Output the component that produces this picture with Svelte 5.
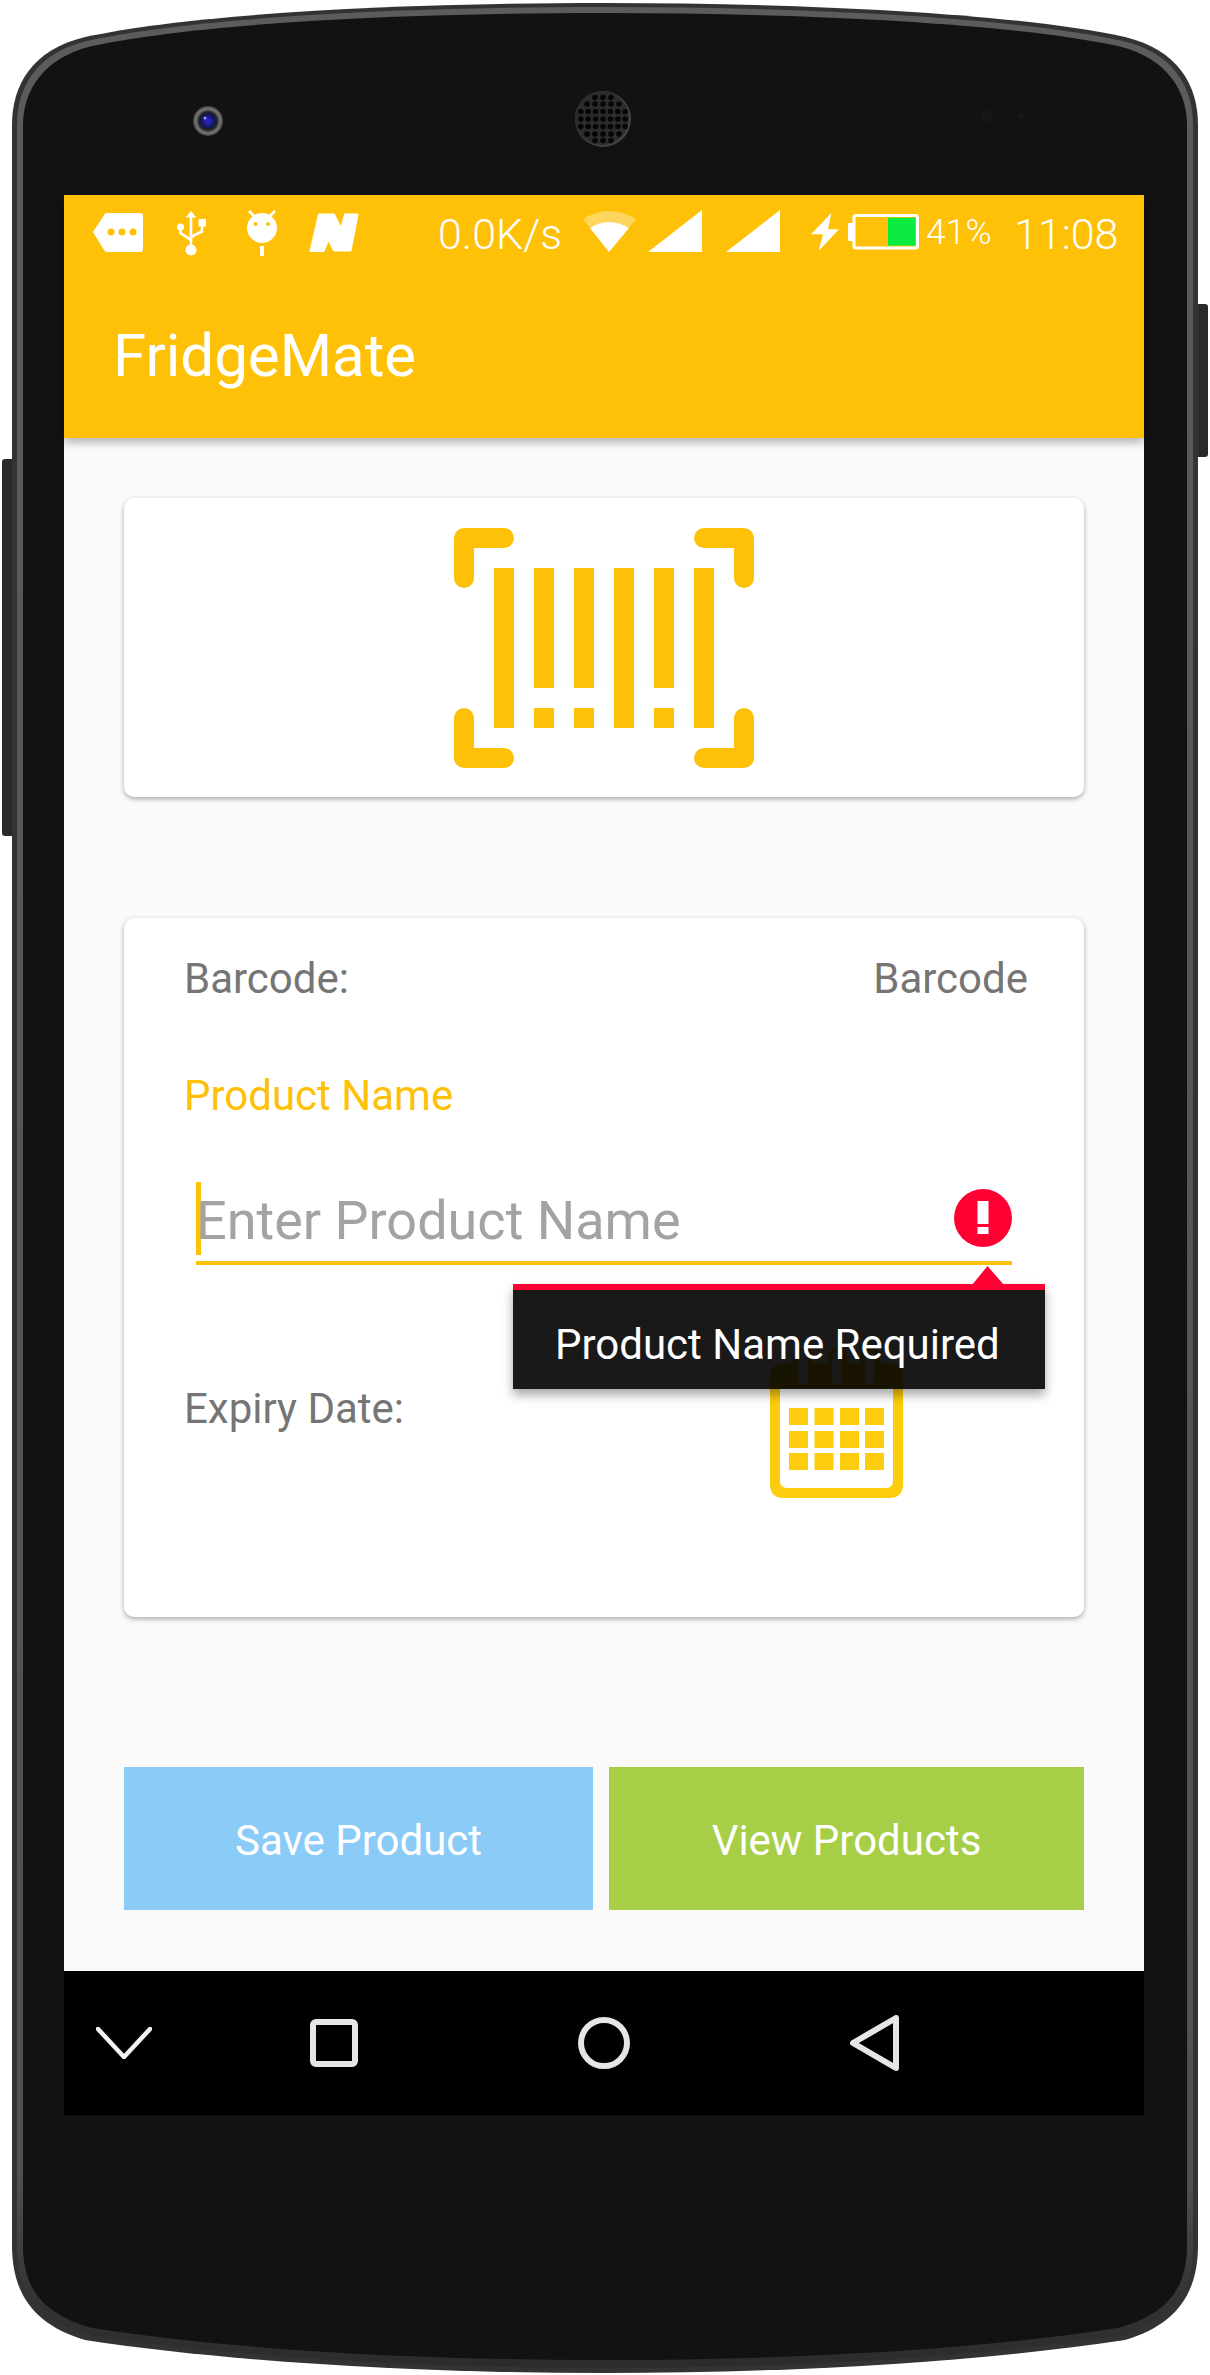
<script>
  const barcodeBars = [
    { x: 40, split: false },
    { x: 80, split: true },
    { x: 120, split: true },
    { x: 160, split: false },
    { x: 200, split: true },
    { x: 240, split: false }
  ];
  const calCols = [19, 44.5, 70, 95];
  const calRows = [60, 83, 105];
  const calPins = [33, 67, 100];
  const speakerHoles = [];
  [[0, 3, 7.4], [-7.5, 3, 7.4], [7.5, 3, 7.4], [-15, 2, 8], [15, 2, 8], [-21.5, 1, 8], [21.5, 1, 8]].forEach(([y, r, step]) => {
    for (let i = -r; i <= r; i++) {
      const x = i * step + (Math.abs(y) === 7.5 || Math.abs(y) === 21.5 ? 0 : 0);
      speakerHoles.push({ x: 603 + x, y: 119 + y });
    }
  });
</script>

<div class="device">
  <svg class="shell" width="1210" height="2375" viewBox="0 0 1210 2375" aria-hidden="true">
    <defs>
      <radialGradient id="lens" cx="0.5" cy="0.5" r="0.5">
        <stop offset="0" stop-color="#2a2ad0" />
        <stop offset="0.45" stop-color="#14145a" />
        <stop offset="0.6" stop-color="#222" />
        <stop offset="0.8" stop-color="#777" />
        <stop offset="1" stop-color="#444" />
      </radialGradient>
      <linearGradient id="rim" x1="0" y1="0" x2="0" y2="1">
        <stop offset="0" stop-color="#5c5c5c" />
        <stop offset="0.92" stop-color="#505050" />
        <stop offset="0.97" stop-color="#333" />
        <stop offset="1" stop-color="#2c2c2c" />
      </linearGradient>
    </defs>
    <rect x="2" y="459" width="20" height="377" rx="3" fill="#2a2a2a" />
    <rect x="1188" y="304" width="20" height="153" rx="3" fill="#2a2a2a" />
    <path d="M12 125 C12 85 32 50 85 37 C200 12 420 3 605 3 C790 3 1010 12 1125 37 C1178 50 1198 85 1198 125 L1198 2245 C1198 2295 1175 2325 1125 2340 C980 2362 790 2373 605 2373 C420 2373 230 2362 85 2340 C35 2325 12 2295 12 2245 Z" fill="#333" />
    <path d="M17 125 C17 88 36 53 87 41 C200 16 420 7 605 7 C790 7 1010 16 1123 41 C1174 53 1193 88 1193 125 L1193 2245 C1193 2292 1172 2320 1123 2335 C980 2357 790 2368 605 2368 C420 2368 230 2357 87 2335 C38 2320 17 2292 17 2245 Z" fill="url(#rim)" />
    <path d="M23 125 C23 92 42 58 92 46 C205 22 420 13 605 13 C790 13 1005 22 1118 46 C1168 58 1187 92 1187 125 L1187 2245 C1187 2288 1168 2314 1118 2328 C975 2350 790 2360 605 2360 C420 2360 235 2350 92 2328 C42 2314 23 2288 23 2245 Z" fill="#121212" />
    <circle cx="208" cy="121" r="15" fill="url(#lens)" />
    <circle cx="205" cy="118" r="1.5" fill="#9a9aff" />
    <circle cx="603" cy="119" r="28" fill="#444" />
    <circle cx="602" cy="118" r="27" fill="#2c2c2c" />
    {#each speakerHoles as hole}
      <circle cx={hole.x} cy={hole.y} r="2.8" fill="#060606" />
    {/each}
    <circle cx="987" cy="116" r="6" fill="#191716" />
    <circle cx="1021" cy="116" r="3.5" fill="#1c1614" />
  </svg>

  <div class="screen">
    <header class="bar">
      <div class="status">
        <svg class="tag" width="50" height="48" viewBox="0 0 50 48" aria-hidden="true">
          <path d="M0 22 L11 5 Q12 3 14 3 H47 Q50 3 50 6 V39 Q50 42 47 42 H14 Q12 42 11 40 Z" fill="#fff" />
          <circle cx="18" cy="22" r="3.5" fill="#ffc107" />
          <circle cx="29" cy="22" r="3.5" fill="#ffc107" />
          <circle cx="40" cy="22" r="3.5" fill="#ffc107" />
        </svg>
        <svg class="usb" width="29" height="48" viewBox="0 0 29 48" aria-hidden="true">
          <path d="M14 1 L19.5 7.5 H8.5 Z" fill="#fff" />
          <circle cx="14" cy="40" r="5.5" fill="#fff" />
          <circle cx="3.5" cy="17" r="3.5" fill="#fff" />
          <rect x="21.5" y="9" width="7.5" height="7.5" fill="#fff" />
          <path d="M14 6 V36 M3.5 17 V23 L14 30 M25 16 V21.5 L14 27" fill="none" stroke="#fff" stroke-width="2.6" />
        </svg>
        <svg class="droid" width="30" height="48" viewBox="0 0 30 48" aria-hidden="true">
          <circle cx="15" cy="18" r="15" fill="#fff" />
          <circle cx="8.5" cy="14" r="2" fill="#ffc107" />
          <circle cx="21" cy="14" r="2" fill="#ffc107" />
          <path d="M2 1 L8 7 M28 1 L22 7" stroke="#fff" stroke-width="2.6" />
          <rect x="13" y="36" width="4" height="10" fill="#fff" />
        </svg>
        <svg class="nfc" width="50" height="48" viewBox="0 0 50 48" aria-hidden="true">
          <path d="M1.5 41 L10 4.5 H25 L32 19 L36 4.5 H48.5 L41.5 40.5 H25 L19.5 29 L14.5 41 Z" fill="#fff" stroke="#fff" stroke-width="2" stroke-linejoin="round" />
        </svg>
        <span class="speed">0.0K/s</span>
        <svg class="wifi" width="53" height="48" viewBox="0 0 53 48" aria-hidden="true">
          <path d="M26 42 L0 9 Q26 -7 53 9 Z" fill="#fff" opacity="0.35" />
          <path d="M26 42 L7 18 Q26 6 46 18 Z" fill="#fff" />
        </svg>
        <svg class="sig1" width="54" height="48" viewBox="0 0 54 48" aria-hidden="true">
          <path d="M0 42 L54 0 V42 Z" fill="#fff" />
        </svg>
        <svg class="sig2" width="54" height="48" viewBox="0 0 54 48" aria-hidden="true">
          <path d="M0 42 L54 0 V42 Z" fill="#fff" />
        </svg>
        <svg class="bolt" width="28" height="48" viewBox="0 0 28 48" aria-hidden="true">
          <path d="M20.4 3 L0 24.3 H12 L7.6 41 L28 19.3 H17 Z" fill="#fff" />
        </svg>
        <svg class="batt" width="71" height="48" viewBox="0 0 71 48" aria-hidden="true">
          <rect x="0" y="13" width="6" height="18" rx="1" fill="#fff" />
          <rect x="6" y="5.5" width="63.5" height="32.5" rx="2" fill="none" stroke="#fff" stroke-width="3" />
          <rect x="40" y="7.7" width="27.5" height="28" fill="#0beb40" />
        </svg>
        <span class="pct">41%</span>
        <span class="time">11:08</span>
      </div>
      <h1>FridgeMate</h1>
    </header>

    <main class="content">
      <section class="card scan">
        <svg width="300" height="240" viewBox="0 0 300 240" aria-label="Scan barcode">
          <g fill="none" stroke="#ffc107" stroke-width="20" stroke-linecap="round" stroke-linejoin="round">
            <path d="M10 50 V10 H50" />
            <path d="M250 10 H290 V50" />
            <path d="M10 190 V230 H50" />
            <path d="M250 230 H290 V190" />
          </g>
          {#each barcodeBars as bar}
            {#if bar.split}
              <rect x={bar.x} y="40" width="20" height="120" fill="#ffc107" />
              <rect x={bar.x} y="180" width="20" height="20" fill="#ffc107" />
            {:else}
              <rect x={bar.x} y="40" width="20" height="160" fill="#ffc107" />
            {/if}
          {/each}
        </svg>
      </section>

      <section class="card form">
        <div class="row">
          <span>Barcode:</span>
          <span>Barcode</span>
        </div>
        <div class="name-label">Product Name</div>
        <div class="field">
          <span class="caret"></span>
          <span class="placeholder">Enter Product Name</span>
          <svg class="error" width="58" height="58" viewBox="0 0 58 58" aria-hidden="true">
            <circle cx="29" cy="29" r="29" fill="#ff0033" />
            <rect x="23.5" y="12" width="11" height="23" fill="#fff" />
            <rect x="23.5" y="38" width="11" height="7" fill="#fff" />
          </svg>
          <div class="tip" role="alert">
            <svg class="tip-arrow" width="32" height="19" viewBox="0 0 32 19" aria-hidden="true">
              <path d="M0 19 L15.5 0 L32 19 Z" fill="#ff0033" />
            </svg>
            Product Name Required
          </div>
        </div>
        <div class="expiry">
          <span class="expiry-label">Expiry Date:</span>
          <svg class="calendar" width="133" height="150" viewBox="0 0 133 150" aria-label="Pick date">
            <path fill-rule="evenodd" fill="#fdcc0d" d="M14 15 H23 V10 Q23 0 33 0 Q43 0 43 10 V15 H57 V10 Q57 0 67 0 Q77 0 77 10 V15 H90 V10 Q90 0 100 0 Q110 0 110 10 V15 H119 Q133 15 133 29 V136 Q133 150 119 150 H14 Q0 150 0 136 V29 Q0 15 14 15 Z M10 40 V133 Q10 140 17 140 H116 Q123 140 123 133 V40 Z" />
            {#each calPins as pin}
              <rect x={pin - 5} y="3" width="10" height="33" rx="5" fill="#fff" />
            {/each}
            {#each calRows as y}
              {#each calCols as x}
                <rect {x} {y} width="19" height="17" fill="#fdcc0d" />
              {/each}
            {/each}
          </svg>
        </div>
      </section>

      <div class="actions">
        <button class="save">Save Product</button>
        <button class="view">View Products</button>
      </div>
    </main>

    <nav class="nav">
      <svg class="n1" width="56" height="32" viewBox="0 0 56 32" aria-label="Hide keyboard">
        <path d="M2 2 L28 30 L54 2" fill="none" stroke="#f2f2f2" stroke-width="4.5" stroke-linecap="round" stroke-linejoin="round" />
      </svg>
      <svg class="n2" width="48" height="48" viewBox="0 0 48 48" aria-label="Recents">
        <rect x="3" y="3" width="42" height="42" rx="3" fill="none" stroke="#e6e6e6" stroke-width="6" />
      </svg>
      <svg class="n3" width="52" height="52" viewBox="0 0 52 52" aria-label="Home">
        <circle cx="26" cy="26" r="23" fill="none" stroke="#e6e6e6" stroke-width="6" />
      </svg>
      <svg class="n4" width="49" height="56" viewBox="0 0 49 56" aria-label="Back">
        <path d="M46 3 V53 L3 28 Z" fill="none" stroke="#e6e6e6" stroke-width="6" stroke-linejoin="round" />
      </svg>
    </nav>
  </div>
</div>

<style>
  :global(body) {
    margin: 0;
    background: #fff;
  }
  .device {
    position: relative;
    width: 1210px;
    height: 2375px;
    box-sizing: border-box;
    padding: 195px 66px 0 64px;
    font-family: Roboto, "Liberation Sans", sans-serif;
    overflow: hidden;
  }
  .shell {
    position: absolute;
    left: 0;
    top: 0;
  }
  .screen {
    position: relative;
    height: 1920px;
    display: flex;
    flex-direction: column;
    background: #fafafa;
  }
  .bar {
    height: 243px;
    background: #ffc107;
    box-shadow: 0 4px 9px rgba(0, 0, 0, 0.3);
    position: relative;
    z-index: 1;
    color: #fff;
    box-sizing: border-box;
    padding-top: 15px;
  }
  .status {
    display: flex;
    align-items: flex-start;
    height: 48px;
    padding-left: 29px;
    font-weight: 300;
  }
  .status svg {
    flex: none;
  }
  .usb { margin-left: 34px; }
  .droid { margin-left: 41px; }
  .nfc { margin-left: 32px; }
  .speed {
    margin-left: 79px;
    width: 145px;
    font-size: 43px;
    line-height: 49px;
  }
  .sig1 { margin-left: 12px; }
  .sig2 { margin-left: 24px; }
  .bolt { margin-left: 31px; }
  .batt { margin-left: 9px; }
  .pct {
    margin-left: 7px;
    font-size: 35.5px;
    line-height: 45px;
    width: 88px;
  }
  .time {
    font-size: 43px;
    line-height: 49px;
  }
  h1 {
    margin: 58px 0 0 49px;
    font-size: 60px;
    line-height: 80px;
    font-weight: 400;
  }
  .content {
    flex: 1;
    padding: 60px 60px 0;
  }
  .card {
    background: #fff;
    border-radius: 10px;
    box-shadow: 0 2px 5px rgba(0, 0, 0, 0.32);
  }
  .scan {
    height: 299px;
    display: flex;
    justify-content: center;
    box-sizing: border-box;
    padding-top: 30px;
  }
  .form {
    margin-top: 121px;
    height: 699px;
    box-sizing: border-box;
    padding: 36px 56px 0 60px;
    color: #757575;
    font-size: 42px;
    line-height: 50px;
  }
  .row {
    display: flex;
    justify-content: space-between;
  }
  .name-label {
    margin-top: 67px;
    color: #ffc107;
  }
  .field {
    position: relative;
    margin: 61px 16px 0 12px;
    height: 83px;
    box-sizing: border-box;
    border-bottom: 4px solid #ffc107;
    display: flex;
    align-items: flex-start;
  }
  .caret {
    flex: none;
    width: 5px;
    height: 73px;
    background: #ffc107;
  }
  .placeholder {
    flex: 1;
    margin-left: -5px;
    font-size: 54px;
    line-height: 78px;
    color: #a3a3a3;
  }
  .error {
    margin-top: 7px;
    flex: none;
  }
  .tip {
    position: absolute;
    left: 317px;
    top: 102px;
    width: 532px;
    height: 105px;
    box-sizing: border-box;
    border-top: 6px solid #ff0033;
    padding: 30px 0 0 42px;
    background: rgba(0, 0, 0, 0.9);
    color: #fff;
    font-size: 42px;
    line-height: 50px;
    box-shadow: 0 6px 10px rgba(0, 0, 0, 0.35);
    z-index: 2;
  }
  .tip-arrow {
    position: absolute;
    left: 459px;
    top: -24px;
  }
  .expiry {
    margin-top: 83px;
    display: flex;
    align-items: flex-start;
  }
  .expiry-label {
    margin-top: 36px;
    width: 586px;
  }
  .calendar {
    flex: none;
  }
  .actions {
    margin-top: 150px;
    display: grid;
    grid-template-columns: 469px 475px;
    gap: 16px;
  }
  button {
    height: 143px;
    border: 0;
    padding: 3px 0 0;
    color: #fff;
    font: 400 42px Roboto, "Liberation Sans", sans-serif;
  }
  .save { background: #8acbf8; }
  .view { background: #a6ce47; }
  .nav {
    height: 144px;
    background: #000;
    display: flex;
    align-items: center;
    flex: none;
  }
  .n1 { margin-left: 32px; }
  .n2 { margin-left: 158px; }
  .n3 { margin-left: 220px; }
  .n4 { margin-left: 220px; }
</style>
